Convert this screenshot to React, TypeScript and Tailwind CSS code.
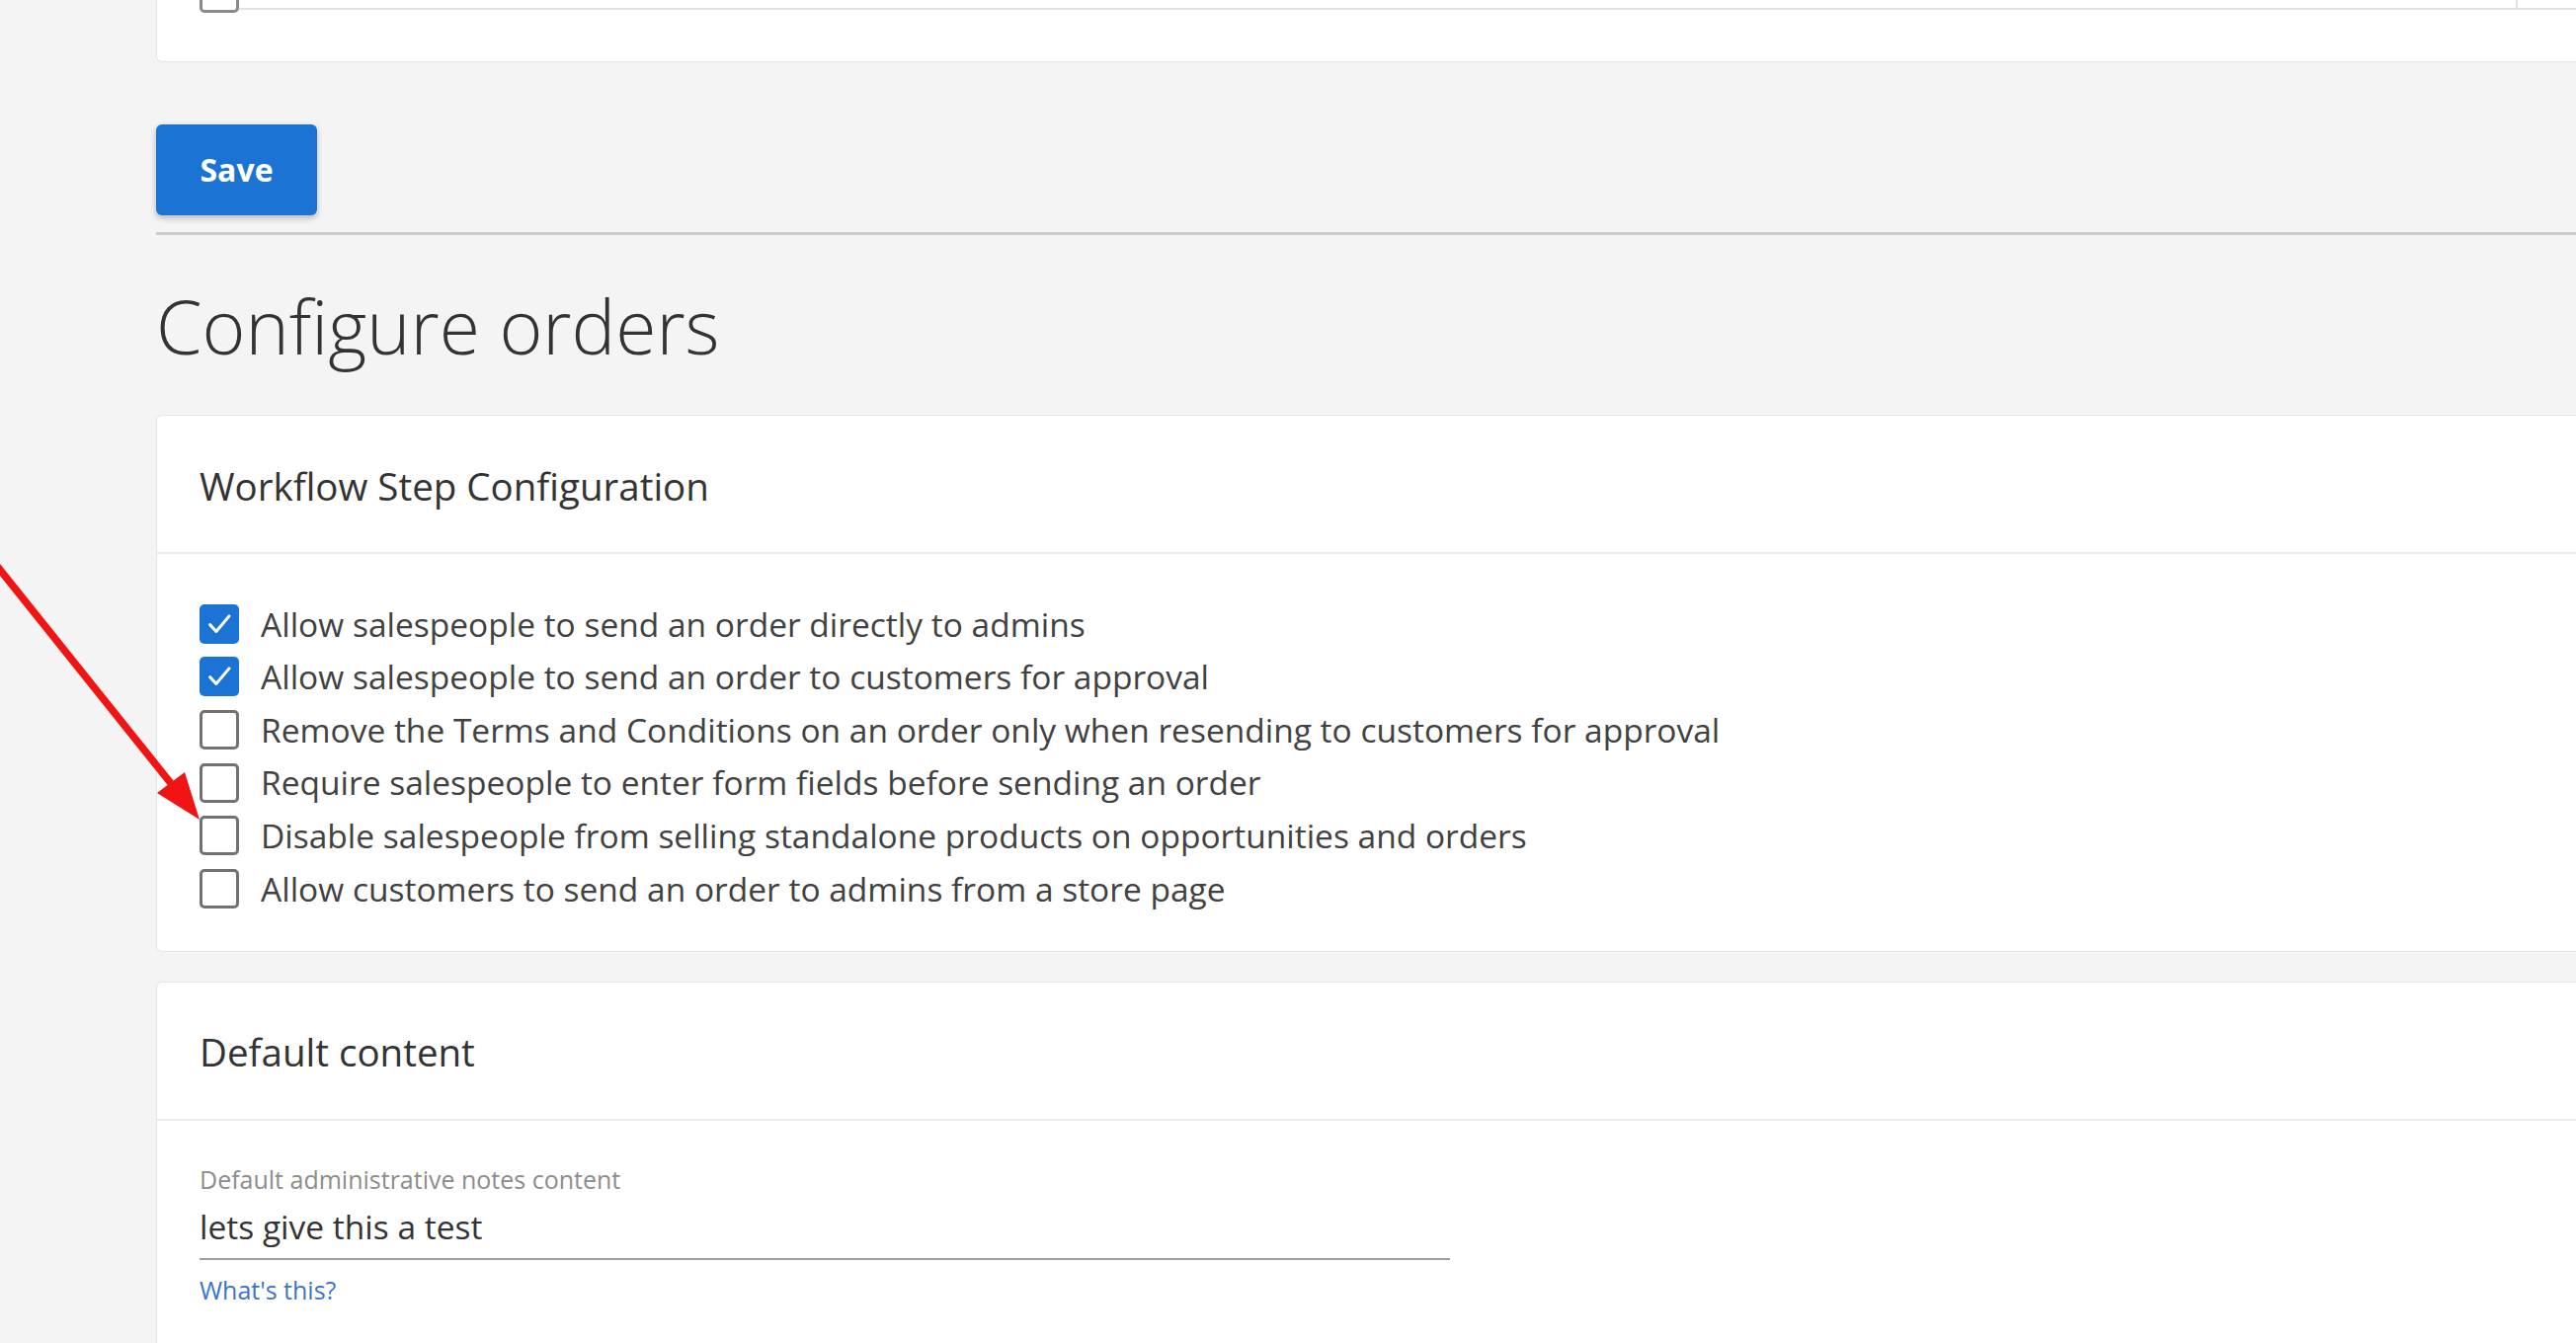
import React from "react";

const font = { fontFamily: '"Open Sans", "Noto Sans", Arial, sans-serif' };

const options = [
  { label: "Allow salespeople to send an order directly to admins", checked: true },
  { label: "Allow salespeople to send an order to customers for approval", checked: true },
  { label: "Remove the Terms and Conditions on an order only when resending to customers for approval", checked: false },
  { label: "Require salespeople to enter form fields before sending an order", checked: false },
  { label: "Disable salespeople from selling standalone products on opportunities and orders", checked: false },
  { label: "Allow customers to send an order to admins from a store page", checked: false },
];

function Checkbox({ checked }: { checked: boolean }) {
  if (checked) {
    return (
      <span className="flex h-[40px] w-[40px] shrink-0 items-center justify-center rounded-[5px] bg-[#1b73d3]">
        <svg viewBox="0 0 24 24" className="h-[30px] w-[30px]" fill="none" stroke="white" strokeWidth="2.4" strokeLinecap="round" strokeLinejoin="round">
          <path d="M4.5 12.5l5 5.5L20 5.5" />
        </svg>
      </span>
    );
  }
  return <span className="block h-[40px] w-[40px] shrink-0 rounded-[5px] border-[3px] border-[#727272] bg-white" />;
}

function CardHeader({ title }: { title: string }) {
  return (
    <div className="flex h-[140px] items-center border-b-2 border-[#ececec] px-[43px] pt-[5px]">
      <h3 className="text-[38.5px] text-[#333]">{title}</h3>
    </div>
  );
}

export default function App() {
  return (
    <div className="relative h-[1360px] overflow-hidden bg-[#f4f4f4]" style={font}>
      <div className="w-[2700px] pl-[158px]">
        {/* tail of the previous card */}
        <div className="h-[63px] overflow-hidden rounded-b-[6px] border border-t-0 border-[#e4e4e4] bg-white">
          <div className="-mt-[27px] flex items-start pl-[43px]">
            <span className="block h-[40px] w-[40px] rounded-[5px] border-[3px] border-[#8a8a8a]" />
            <div className="h-[37px] flex-1 border-b-2 border-[#e2e2e2]" />
            <div className="h-[37px] w-[2px] bg-[#e2e2e2]" />
            <div className="h-[37px] w-[150px] border-b-2 border-[#e2e2e2]" />
          </div>
        </div>

        <button className="mt-[63px] h-[92px] w-[163px] rounded-[6px] bg-[#1b73d3] text-[32px] font-bold text-white shadow-[0_3px_6px_rgba(0,0,0,0.25)]">
          Save
        </button>

        <div className="mt-[17px] h-[3px] bg-[#cbcbcb]" />

        <h1 className="mt-[42px] text-[75px] font-light leading-[100px] text-[#333]">Configure orders</h1>

        <section className="mt-[40px] rounded-[6px] border border-[#e4e4e4] bg-white">
          <CardHeader title="Workflow Step Configuration" />
          <div className="px-[43px] pb-[36px] pt-[44px]">
            {options.map((o) => (
              <label key={o.label} className="flex h-[53.6px] items-center gap-[22px] text-[33.5px] text-[#414141]">
                <Checkbox checked={o.checked} />
                <span>{o.label}</span>
              </label>
            ))}
          </div>
        </section>

        <section className="mt-[30px] rounded-[6px] border border-[#e4e4e4] bg-white">
          <CardHeader title="Default content" />
          <div className="px-[43px] pt-[44px]">
            <div className="text-[25px] leading-[30px] text-[#8c8c8c]">Default administrative notes content</div>
            <div className="mt-[10px] w-[1266px] border-b-2 border-[#9e9e9e] pb-[9px] text-[33.5px] leading-[46px] text-[#333]">
              lets give this a test
            </div>
            <a className="mt-[15px] block text-[25px] leading-[30px] text-[#3b74c6]">What's this?</a>
            <div className="h-[80px]" />
          </div>
        </section>
      </div>

      {/* red annotation arrow */}
      <svg className="pointer-events-none absolute left-0 top-0" width="260" height="900" viewBox="0 0 260 900">
        <line x1="-4" y1="572" x2="176" y2="797" stroke="#f01414" strokeWidth="7.5" />
        <polygon points="202,830 159,803 187,782" fill="#f01414" />
      </svg>
    </div>
  );
}
